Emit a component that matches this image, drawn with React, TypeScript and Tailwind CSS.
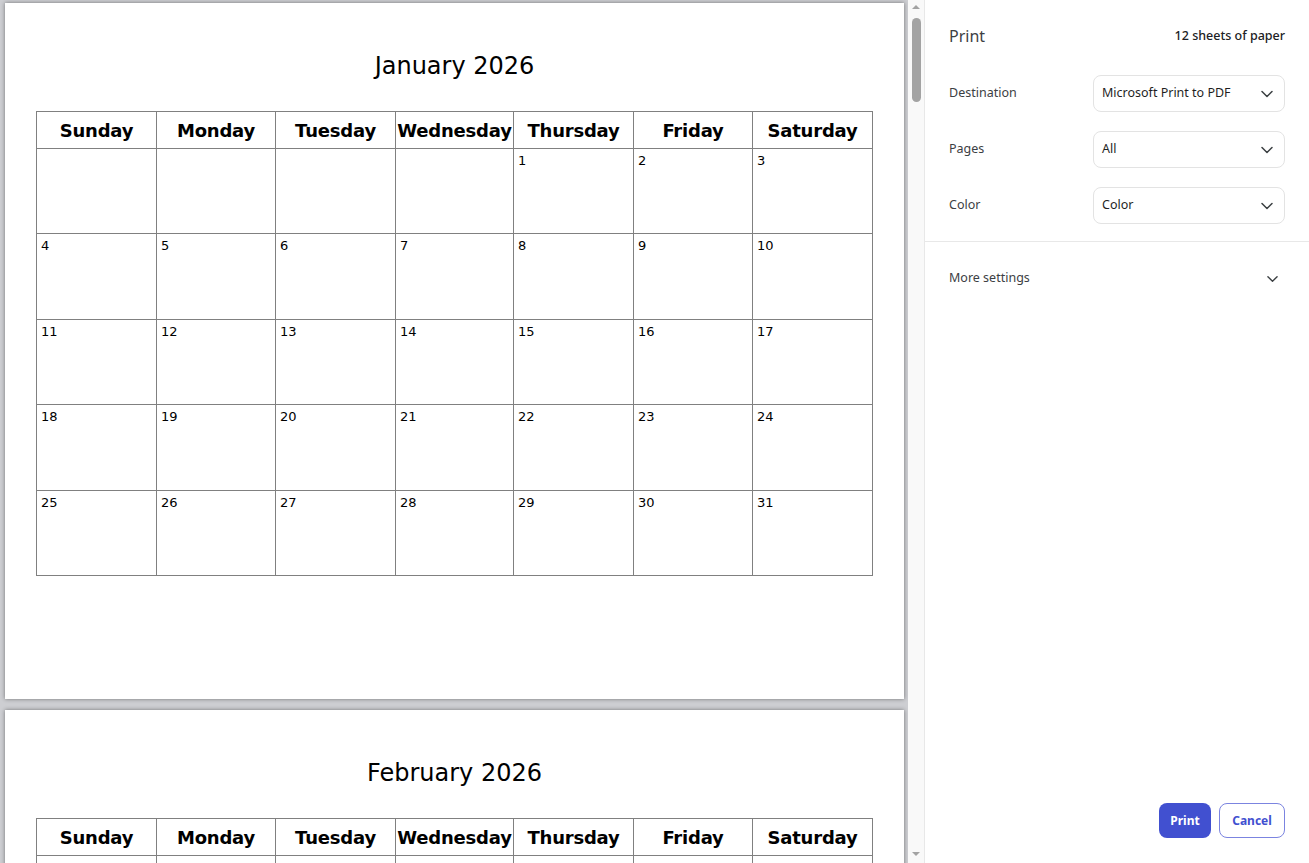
import React from "react";

const DAYS = ["Sunday", "Monday", "Tuesday", "Wednesday", "Thursday", "Friday", "Saturday"];
const MONTHS = [
  "January", "February", "March", "April", "May", "June",
  "July", "August", "September", "October", "November", "December",
];

function monthCells(year: number, month: number) {
  const first = new Date(year, month, 1).getDay();
  const count = new Date(year, month + 1, 0).getDate();
  const cells: (number | null)[] = Array(first).fill(null);
  for (let d = 1; d <= count; d++) cells.push(d);
  while (cells.length % 7) cells.push(null);
  return cells;
}

function Chevron({ w = 12 }: { w?: number }) {
  return (
    <svg width={w} height={8} viewBox="0 0 12 8" fill="none" className="shrink-0">
      <path d="M1 1.5 6 6.5 11 1.5" stroke="#3c4043" strokeWidth="1.5" strokeLinecap="round" strokeLinejoin="round" />
    </svg>
  );
}

function Page({ month }: { month: number }) {
  const cells = monthCells(2026, month);
  return (
    <div className="w-[899px] h-[696px] shrink-0 bg-white shadow-[0_0_4px_rgba(0,0,0,0.45)] pt-[48px] font-['DejaVu_Sans',Verdana,sans-serif] text-black">
      <h1 className="text-center text-[24px] leading-[30px] font-normal">
        {MONTHS[month]} 2026
      </h1>
      <div className="ml-[31px] mt-[30px] w-[837px] grid grid-cols-[120px_119px_120px_118px_120px_119px_120px] border-l border-t border-[#808080]">
        {DAYS.map((d) => (
          <div key={d} className="h-[37px] border-r border-b border-[#808080] flex items-center justify-center text-[18px] font-bold tracking-[-0.2px]">
            {d}
          </div>
        ))}
        {cells.map((n, i) => (
          <div
            key={i}
            className={
              (Math.floor(i / 7) % 2 === 0 ? "h-[85px]" : "h-[86px]") +
              " border-r border-b border-[#808080] pl-1 pt-1 text-[13px] leading-4"
            }
          >
            {n}
          </div>
        ))}
      </div>
    </div>
  );
}

function Field({ label, value }: { label: string; value: string }) {
  return (
    <div className="flex items-center h-[37px]">
      <div className="w-[144px] text-[12.5px] text-[#3c4043]">{label}</div>
      <div className="w-[192px] h-[37px] border border-[#e3e3e3] rounded-lg pl-2 pr-[11px] flex items-center justify-between text-[12.5px] text-[#1f1f1f]">
        <span>{value}</span>
        <Chevron />
      </div>
    </div>
  );
}

export default function App() {
  return (
    <div className="flex h-[863px] w-full overflow-hidden bg-white">
      {/* preview */}
      <div className="w-[908px] shrink-0 h-full overflow-hidden bg-[#cdced2] pl-[5px] pt-[3px] flex flex-col gap-[11px]">
        {MONTHS.map((_, m) => (
          <Page key={m} month={m} />
        ))}
      </div>

      {/* scrollbar */}
      <div className="w-[16px] shrink-0 h-full bg-[#f9f9f9] flex flex-col items-center">
        <div className="mt-[5px] w-0 h-0 border-l-[4px] border-r-[4px] border-b-[4px] border-l-transparent border-r-transparent border-b-[#a3a3a3]" />
        <div className="mt-[9px] w-[9px] h-[84px] rounded-full bg-[#a3a3a3]" />
        <div className="mt-auto mb-[7px] w-0 h-0 border-l-[4px] border-r-[4px] border-t-[4px] border-l-transparent border-r-transparent border-t-[#a3a3a3]" />
      </div>

      {/* settings panel */}
      <aside className="w-[385px] shrink-0 h-full border-l border-[#e8e8e8] flex flex-col font-['Noto_Sans',sans-serif]">
        <div className="flex items-center justify-between px-6 pt-6">
          <span className="text-[16px] leading-6 text-[#3c4043]">Print</span>
          <span className="text-[12.5px] leading-6 font-medium text-[#202124]">12 sheets of paper</span>
        </div>

        <div className="mt-[27px] px-6 flex flex-col gap-[19px]">
          <Field label="Destination" value="Microsoft Print to PDF" />
          <Field label="Pages" value="All" />
          <Field label="Color" value="Color" />
        </div>

        <div className="mt-[17px] border-t border-[#e8e8e8]" />

        <div className="h-[73px] pl-6 pr-[31px] flex items-center justify-between">
          <span className="text-[12.5px] text-[#3c4043]">More settings</span>
          <Chevron w={11} />
        </div>

        <div className="mt-auto px-6 pb-[25px] flex justify-end gap-2">
          <button className="w-[52px] h-[35px] rounded-lg bg-[#4150d0] text-white text-[12px] font-bold">
            Print
          </button>
          <button className="w-[66px] h-[35px] rounded-lg border border-[#7b84e0] bg-white text-[#4150d0] text-[12px] font-bold">
            Cancel
          </button>
        </div>
      </aside>
    </div>
  );
}
